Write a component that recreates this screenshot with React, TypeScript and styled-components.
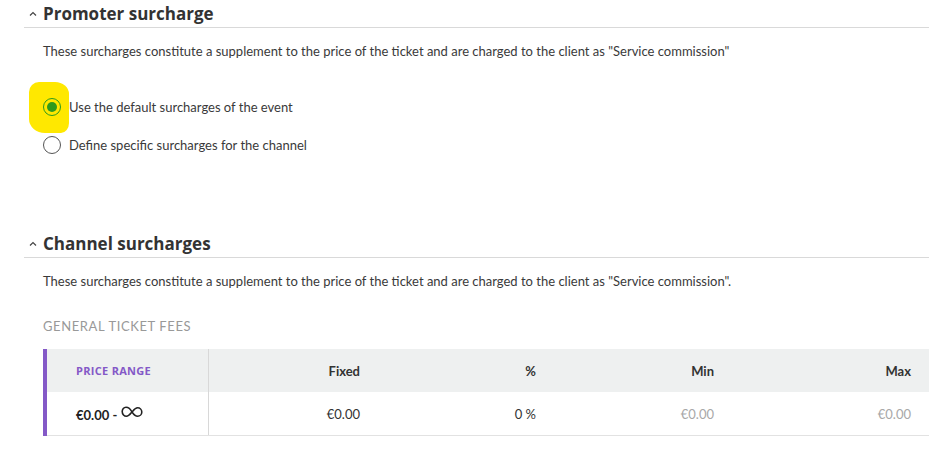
import React from 'react'
import styled, { createGlobalStyle } from 'styled-components'

const GlobalStyle = createGlobalStyle`
  body {
    margin: 0;
    background: #ffffff;
    font-family: Lato, "Noto Sans", sans-serif;
    color: #3c3c3c;
  }
`

const Page = styled.div`
  width: 905px;
  padding: 0 14px 0 24px;
`

const Section = styled.section<{ $gap?: number }>`
  margin-bottom: ${(p) => p.$gap ?? 0}px;
`

const Header = styled.div`
  display: flex;
  align-items: center;
  gap: 6px;
  height: 27px;
  border-bottom: 1px solid #d9d9d9;
  padding-left: 5px;
`

const Chevron = styled.span`
  display: inline-flex;
  width: 8px;
  color: #444;
`

const Title = styled.h2`
  margin: 0;
  font-family: "Open Sans", Lato, sans-serif;
  font-size: 17px;
  font-weight: 700;
  color: #333;
  line-height: 27px;
`

const Desc = styled.p`
  margin: 0;
  padding: 16px 0 0 19px;
  font-size: 13px;
  line-height: 14px;
  color: #3a3a3a;
`

const Options = styled.div`
  display: flex;
  flex-direction: column;
  gap: 20px;
  padding: 40px 0 0 19px;
`

const Option = styled.label`
  position: relative;
  display: flex;
  align-items: center;
  gap: 8px;
  font-size: 13px;
  color: #3a3a3a;
  height: 18px;
`

// marker highlight drawn over the screenshot
const Highlight = styled.span`
  position: absolute;
  left: -14px;
  top: -16px;
  width: 40px;
  height: 51px;
  background: #ffe800;
  border-radius: 10px 14px 8px 16px / 10px 12px 10px 14px;
`

const Radio = styled.span<{ $checked?: boolean }>`
  position: relative;
  box-sizing: border-box;
  width: 18px;
  height: 18px;
  border-radius: 50%;
  border: ${(p) => (p.$checked ? '1.5px solid #2e9a1c' : '1.5px solid #555')};
  background: ${(p) => (p.$checked ? 'transparent' : '#fff')};
  display: flex;
  align-items: center;
  justify-content: center;
  &::after {
    content: '';
    display: ${(p) => (p.$checked ? 'block' : 'none')};
    width: 10px;
    height: 10px;
    border-radius: 50%;
    background: #2e9a1c;
  }
`

const SubTitle = styled.div`
  padding: 31px 0 0 19px;
  font-size: 13px;
  line-height: 14px;
  letter-spacing: 0.6px;
  color: #999;
  text-transform: uppercase;
`

const Table = styled.div`
  margin: 16px 0 0 19px;
  border-left: 4px solid #8459c7;
`

const Row = styled.div<{ $head?: boolean }>`
  display: grid;
  grid-template-columns: 162px 169px 176px 178px 1fr;
  height: 43px;
  background: ${(p) => (p.$head ? '#eef0f0' : '#fff')};
  border-bottom: ${(p) => (p.$head ? 'none' : '1px solid #e2e2e2')};
`

const Cell = styled.div<{ $first?: boolean; $head?: boolean; $muted?: boolean }>`
  display: flex;
  align-items: center;
  justify-content: ${(p) => (p.$first ? 'flex-start' : 'flex-end')};
  padding: ${(p) => (p.$first ? '0 0 0 29px' : '0 18px 0 0')};
  border-right: ${(p) => (p.$first ? '1px solid #d8d8d8' : 'none')};
  font-size: 13px;
  font-weight: ${(p) => (p.$head ? 700 : 400)};
  color: ${(p) => (p.$muted ? '#a8a8a8' : '#333')};
`

const RangeHead = styled(Cell)`
  font-family: "Open Sans", Lato, sans-serif;
  font-size: 11px;
  color: #8459c7;
  letter-spacing: 0.3px;
`

const Range = styled.span`
  display: inline-flex;
  align-items: center;
  gap: 4px;
  font-weight: 700;
  color: #222;
  padding-top: 2px;
`

const desc =
  'These surcharges constitute a supplement to the price of the ticket and are charged to the client as "Service commission"'

function Caret() {
  return (
    <Chevron>
      <svg width="8" height="6" viewBox="0 0 8 6">
        <path d="M1 4.5 L4 1.5 L7 4.5" fill="none" stroke="#444" strokeWidth="1.2" />
      </svg>
    </Chevron>
  )
}

function Infinity() {
  return (
    <svg width="22" height="12" viewBox="0 0 22 12" style={{ marginTop: -6 }}>
      <path
        d="M11 6 C9 2 6.5 1.2 5 1.2 C2.8 1.2 1.2 3.2 1.2 5.6 C1.2 8.2 3.2 10.3 5.4 10.3 C7.8 10.3 9.3 8 11 6 C12.7 4 14.2 1.7 16.6 1.7 C18.8 1.7 20.8 3.6 20.8 6 C20.8 8.4 18.8 10.3 16.6 10.3 C14.4 10.3 12.8 8.6 11 6 Z"
        fill="none"
        stroke="#222"
        strokeWidth="1.6"
      />
    </svg>
  )
}

export default function App() {
  return (
    <>
      <GlobalStyle />
      <Page>
        <Section $gap={76}>
          <Header>
            <Caret />
            <Title>Promoter surcharge</Title>
          </Header>
          <Desc>{desc}</Desc>
          <Options>
            <Option>
              <Highlight />
              <Radio $checked />
              Use the default surcharges of the event
            </Option>
            <Option>
              <Radio />
              Define specific surcharges for the channel
            </Option>
          </Options>
        </Section>
        <Section>
          <Header>
            <Caret />
            <Title>Channel surcharges</Title>
          </Header>
          <Desc>{desc}.</Desc>
          <SubTitle>General ticket fees</SubTitle>
          <Table>
            <Row $head>
              <RangeHead $first $head>PRICE RANGE</RangeHead>
              <Cell $head>Fixed</Cell>
              <Cell $head>%</Cell>
              <Cell $head>Min</Cell>
              <Cell $head>Max</Cell>
            </Row>
            <Row>
              <Cell $first>
                <Range>
                  €0.00 - <Infinity />
                </Range>
              </Cell>
              <Cell>€0.00</Cell>
              <Cell>0 %</Cell>
              <Cell $muted>€0.00</Cell>
              <Cell $muted>€0.00</Cell>
            </Row>
          </Table>
        </Section>
      </Page>
    </>
  )
}
